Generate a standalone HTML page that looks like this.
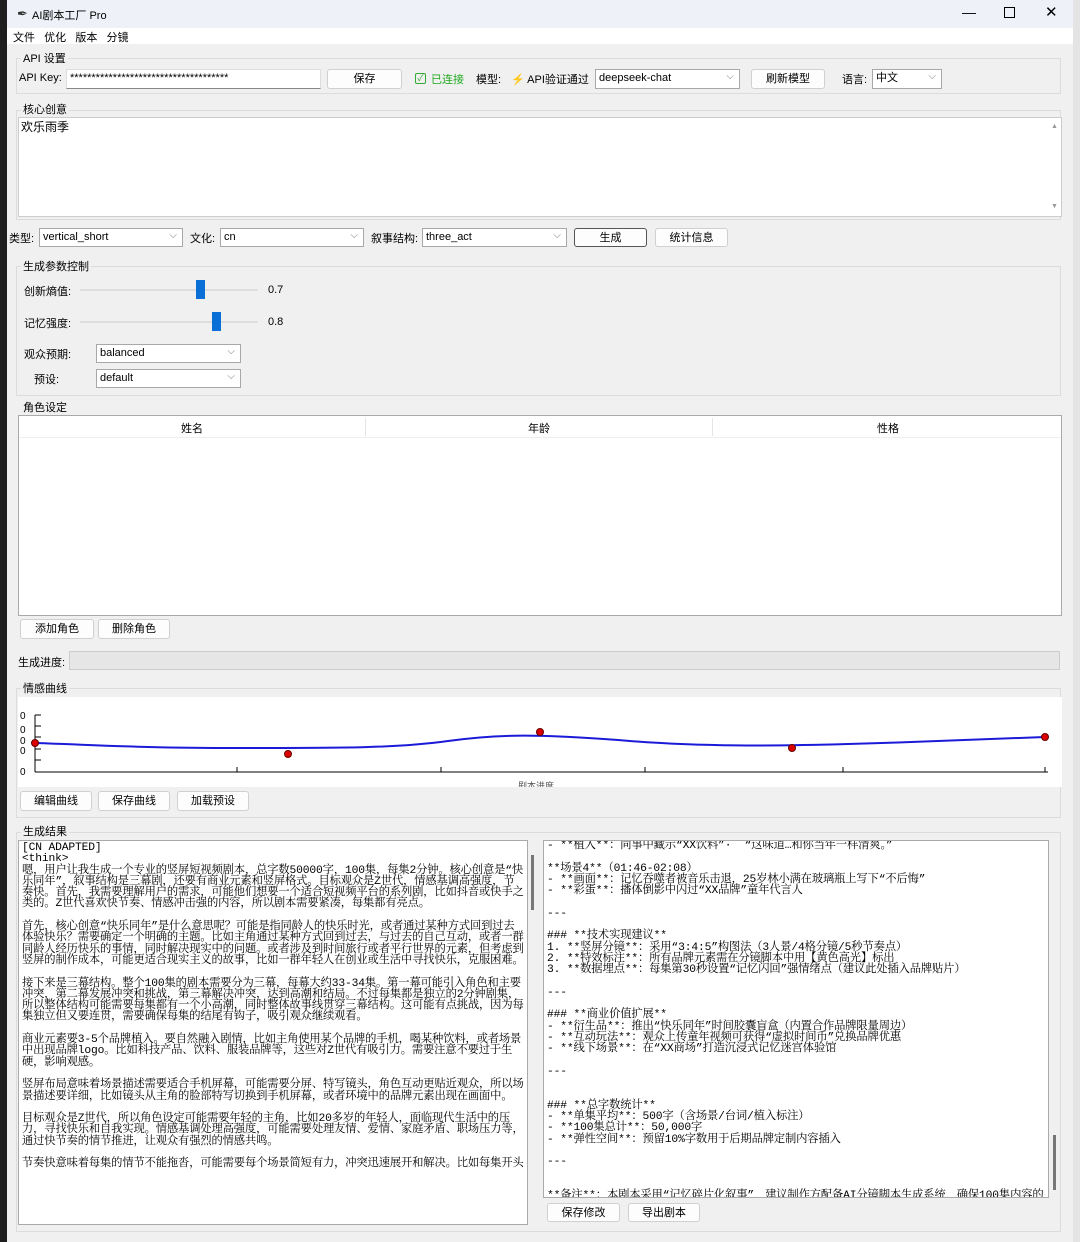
<!DOCTYPE html>
<html><head><meta charset="utf-8"><style>
*{box-sizing:border-box;margin:0;padding:0}
body{width:1080px;height:1242px;background:#f0f0f0;font-family:"Liberation Sans","Noto Sans CJK SC",sans-serif;font-size:11px;color:#000;position:relative;overflow:hidden}
.a{position:absolute}
.btn{position:absolute;background:#fdfdfd;border:1px solid #d0d0d0;border-radius:3px;text-align:center;line-height:18px;font-size:11px}
.inp{position:absolute;background:#fff;border:1px solid #bcbcbc;padding-left:3px;line-height:17px;font-size:11px}
.cb{position:absolute;background:#fff;border:1px solid #a8a8a8;padding-left:3px;line-height:17px;font-size:11px}
.cb:after{content:"⌵";position:absolute;right:5px;top:-2px;color:#777;font-size:10px}
.grp{position:absolute;border:1px solid #dcdcdc}
.lbl{position:absolute;font-size:11px;background:#f0f0f0;padding:0 2px}
.txt{position:absolute;background:#fff;border:1px solid #aaa;font-family:"Liberation Mono","Noto Serif CJK SC",serif;font-size:11.3px;line-height:11.3px;white-space:pre-wrap;word-break:break-all;padding:2px 3px;overflow:hidden;letter-spacing:-0.15px}
</style></head><body>
<div class="a" style="left:0;top:0;width:7px;height:1242px;background:#1e1e1e"></div>
<div class="a" style="left:1073px;top:0;width:7px;height:1242px;background:#e4e4e4"></div>
<div class="a" style="left:7px;top:0;width:1066px;height:28px;background:#eef2f8"></div>
<div class="a" style="left:17px;top:6px;font-size:13px;color:#333">✒</div>
<div class="a" style="left:32px;top:7px;font-size:11px">AI剧本工厂 Pro</div>
<div class="a" style="left:962px;top:4px;font-size:14px">—</div>
<div class="a" style="left:1004px;top:7px;width:11px;height:11px;border:1px solid #000"></div>
<div class="a" style="left:1045px;top:3px;font-size:15px">✕</div>
<div class="a" style="left:7px;top:28px;width:1066px;height:16px;background:#fff"></div>
<div class="a" style="left:13px;top:29px">文件&nbsp;&nbsp;&nbsp;优化&nbsp;&nbsp;&nbsp;版本&nbsp;&nbsp;&nbsp;分镜</div>

<div class="grp" style="left:16px;top:58px;width:1045px;height:36px"></div>
<div class="lbl" style="left:21px;top:50px">API 设置</div>
<div class="a" style="left:19px;top:72px">API Key:</div>
<div class="inp" style="left:66px;top:69px;width:255px;height:20px;border-color:#ddd;border-bottom-color:#888">*************************************</div>
<div class="btn" style="left:327px;top:69px;width:75px;height:20px">保存</div>
<div class="a" style="left:415px;top:73px;width:11px;height:11px;border:1px solid #3a3;border-radius:2px;color:#3a3;font-size:9px;line-height:9px;text-align:center">✓</div>
<div class="a" style="left:431px;top:71px;color:#2a2">已连接</div>
<div class="a" style="left:476px;top:71px">模型:</div>
<div class="a" style="left:511px;top:71px">⚡ API验证通过</div>
<div class="cb" style="left:595px;top:69px;width:145px;height:20px">deepseek-chat</div>
<div class="btn" style="left:751px;top:69px;width:74px;height:20px">刷新模型</div>
<div class="a" style="left:842px;top:71px">语言:</div>
<div class="cb" style="left:872px;top:69px;width:70px;height:20px">中文</div>

<div class="grp" style="left:16px;top:110px;width:1045px;height:110px"></div>
<div class="lbl" style="left:21px;top:101px">核心创意</div>
<div class="a" style="left:18px;top:117px;width:1044px;height:100px;background:#fff;border:1px solid #ccc;font-size:12px;padding:0 2px">欢乐雨季</div>
<div class="a" style="left:1051px;top:123px;font-size:7px;color:#999">▲</div>
<div class="a" style="left:1051px;top:203px;font-size:7px;color:#999">▼</div>

<div class="a" style="left:9px;top:230px">类型:</div>
<div class="cb" style="left:39px;top:228px;width:144px;height:19px">vertical_short</div>
<div class="a" style="left:190px;top:230px">文化:</div>
<div class="cb" style="left:220px;top:228px;width:144px;height:19px">cn</div>
<div class="a" style="left:371px;top:230px">叙事结构:</div>
<div class="cb" style="left:422px;top:228px;width:145px;height:19px">three_act</div>
<div class="btn" style="left:574px;top:228px;width:73px;height:19px;border:1px solid #555">生成</div>
<div class="btn" style="left:655px;top:228px;width:73px;height:19px">统计信息</div>

<div class="grp" style="left:16px;top:266px;width:1045px;height:130px"></div>
<div class="lbl" style="left:21px;top:258px">生成参数控制</div>
<div class="a" style="left:24px;top:283px">创新熵值:</div>
<div class="a" style="left:80px;top:289px;width:178px;height:2px;background:#ddd"></div>
<div class="a" style="left:196px;top:280px;width:9px;height:19px;background:#0a6fd6"></div>
<div class="a" style="left:268px;top:284px">0.7</div>
<div class="a" style="left:24px;top:315px">记忆强度:</div>
<div class="a" style="left:80px;top:321px;width:178px;height:2px;background:#ddd"></div>
<div class="a" style="left:212px;top:312px;width:9px;height:19px;background:#0a6fd6"></div>
<div class="a" style="left:268px;top:316px">0.8</div>
<div class="a" style="left:24px;top:346px">观众预期:</div>
<div class="cb" style="left:96px;top:344px;width:145px;height:19px">balanced</div>
<div class="a" style="left:34px;top:371px">预设:</div>
<div class="cb" style="left:96px;top:369px;width:145px;height:19px">default</div>

<div class="lbl" style="left:21px;top:399px">角色设定</div>
<div class="a" style="left:18px;top:415px;width:1044px;height:201px;background:#fff;border:1px solid #aaa"></div>
<div class="a" style="left:19px;top:416px;width:1042px;height:22px;border-bottom:1px solid #eee"></div>
<div class="a" style="left:365px;top:418px;width:1px;height:18px;background:#e5e5e5"></div>
<div class="a" style="left:712px;top:418px;width:1px;height:18px;background:#e5e5e5"></div>
<div class="a" style="left:181px;top:420px">姓名</div>
<div class="a" style="left:528px;top:420px">年龄</div>
<div class="a" style="left:877px;top:420px">性格</div>
<div class="btn" style="left:20px;top:619px;width:74px;height:20px">添加角色</div>
<div class="btn" style="left:98px;top:619px;width:72px;height:20px">删除角色</div>

<div class="a" style="left:18px;top:654px">生成进度:</div>
<div class="a" style="left:69px;top:651px;width:991px;height:19px;background:#e6e6e6;border:1px solid #ccc"></div>

<div class="grp" style="left:16px;top:688px;width:1045px;height:130px"></div>
<div class="lbl" style="left:21px;top:680px">情感曲线</div>
<svg class="a" style="left:18px;top:697px" width="1044" height="90">
<rect width="1044" height="90" fill="#fff"/>
<line x1="17" y1="18" x2="17" y2="75" stroke="#000"/>
<line x1="17" y1="75" x2="1030" y2="75" stroke="#000"/>
<g stroke="#000"><line x1="17" y1="18" x2="23" y2="18"/><line x1="17" y1="29" x2="23" y2="29"/><line x1="17" y1="40" x2="23" y2="40"/><line x1="17" y1="52" x2="23" y2="52"/><line x1="17" y1="63" x2="23" y2="63"/>
<line x1="219" y1="70" x2="219" y2="75"/><line x1="423" y1="70" x2="423" y2="75"/><line x1="627" y1="70" x2="627" y2="75"/><line x1="825" y1="70" x2="825" y2="75"/><line x1="1027" y1="70" x2="1027" y2="75"/></g>
<g font-size="10" font-family="Liberation Sans"><text x="2" y="22">0</text><text x="2" y="36">0</text><text x="2" y="47">0</text><text x="2" y="57">0</text><text x="2" y="78">0</text></g>
<path d="M17 46 C80 48 120 51 220 51 C330 51 380 51 430 44 C480 37 520 37 600 43 C680 50 760 49 830 47 C900 45 980 42 1027 40" stroke="#1a1ad8" stroke-width="2" fill="none"/>
<g fill="#d00" stroke="#600"><circle cx="17" cy="46" r="3.5"/><circle cx="270" cy="57" r="3.5"/><circle cx="522" cy="35" r="3.5"/><circle cx="774" cy="51" r="3.5"/><circle cx="1027" cy="40" r="3.5"/></g>
<text x="500" y="92" font-size="9" fill="#555">剧本进度</text>
</svg>
<div class="btn" style="left:20px;top:791px;width:72px;height:20px">编辑曲线</div>
<div class="btn" style="left:98px;top:791px;width:72px;height:20px">保存曲线</div>
<div class="btn" style="left:177px;top:791px;width:72px;height:20px">加载预设</div>

<div class="grp" style="left:16px;top:832px;width:1045px;height:400px"></div>
<div class="lbl" style="left:21px;top:823px">生成结果</div>
<div class="txt" style="left:18px;top:840px;width:510px;height:385px">[CN ADAPTED]
&lt;think&gt;
嗯，用户让我生成一个专业的竖屏短视频剧本，总字数50000字，100集，每集2分钟。核心创意是“快乐同年”，叙事结构是三幕剧，还要有商业元素和竖屏格式。目标观众是Z世代，情感基调高强度，节奏快。首先，我需要理解用户的需求，可能他们想要一个适合短视频平台的系列剧，比如抖音或快手之类的。Z世代喜欢快节奏、情感冲击强的内容，所以剧本需要紧凑，每集都有亮点。

首先，核心创意“快乐同年”是什么意思呢？可能是指同龄人的快乐时光，或者通过某种方式回到过去体验快乐？需要确定一个明确的主题。比如主角通过某种方式回到过去，与过去的自己互动，或者一群同龄人经历快乐的事情，同时解决现实中的问题。或者涉及到时间旅行或者平行世界的元素，但考虑到竖屏的制作成本，可能更适合现实主义的故事，比如一群年轻人在创业或生活中寻找快乐，克服困难。

接下来是三幕结构。整个100集的剧本需要分为三幕，每幕大约33-34集。第一幕可能引入角色和主要冲突，第二幕发展冲突和挑战，第三幕解决冲突，达到高潮和结局。不过每集都是独立的2分钟剧集，所以整体结构可能需要每集都有一个小高潮，同时整体故事线贯穿三幕结构。这可能有点挑战，因为每集独立但又要连贯，需要确保每集的结尾有钩子，吸引观众继续观看。

商业元素要3-5个品牌植入。要自然融入剧情，比如主角使用某个品牌的手机，喝某种饮料，或者场景中出现品牌logo。比如科技产品、饮料、服装品牌等，这些对Z世代有吸引力。需要注意不要过于生硬，影响观感。

竖屏布局意味着场景描述需要适合手机屏幕，可能需要分屏、特写镜头，角色互动更贴近观众，所以场景描述要详细，比如镜头从主角的脸部特写切换到手机屏幕，或者环境中的品牌元素出现在画面中。

目标观众是Z世代，所以角色设定可能需要年轻的主角，比如20多岁的年轻人，面临现代生活中的压力，寻找快乐和自我实现。情感基调处理高强度，可能需要处理友情、爱情、家庭矛盾、职场压力等，通过快节奏的情节推进，让观众有强烈的情感共鸣。

节奏快意味着每集的情节不能拖沓，可能需要每个场景简短有力，冲突迅速展开和解决。比如每集开头</div>
<div class="a" style="left:531px;top:855px;width:3px;height:55px;background:#777"></div>
<div class="txt" style="left:543px;top:840px;width:506px;height:358px;padding-top:0">- **植入**：同事中藏示“XX饮料”·  “这味道…和你当年一样清爽。”

**场景4**（01:46-02:08）
- **画面**：记忆吞噬者被音乐击退，25岁林小满在玻璃瓶上写下“不后悔”
- **彩蛋**：播体倒影中闪过“XX品牌”童年代言人

---

### **技术实现建议**
1. **竖屏分镜**：采用“3:4:5”构图法（3人景/4格分镜/5秒节奏点）
2. **特效标注**：所有品牌元素需在分镜脚本中用【黄色高光】标出
3. **数据埋点**：每集第30秒设置“记忆闪回”强情绪点（建议此处插入品牌贴片）

---

### **商业价值扩展**
- **衍生品**：推出“快乐同年”时间胶囊盲盒（内置合作品牌限量周边）
- **互动玩法**：观众上传童年视频可获得“虚拟时间币”兑换品牌优惠
- **线下场景**：在“XX商场”打造沉浸式记忆迷宫体验馆

---


### **总字数统计**
- **单集平均**：500字（含场景/台词/植入标注）
- **100集总计**：50,000字
- **弹性空间**：预留10%字数用于后期品牌定制内容插入

---


**备注**：本剧本采用“记忆碎片化叙事”，建议制作方配备AI分镜脚本生成系统，确保100集内容的视觉统一性与商业价值最大化。</div>
<div class="a" style="left:1053px;top:1135px;width:3px;height:55px;background:#777"></div>
<div class="btn" style="left:547px;top:1203px;width:73px;height:19px">保存修改</div>
<div class="btn" style="left:628px;top:1203px;width:72px;height:19px">导出剧本</div>
</body></html>
